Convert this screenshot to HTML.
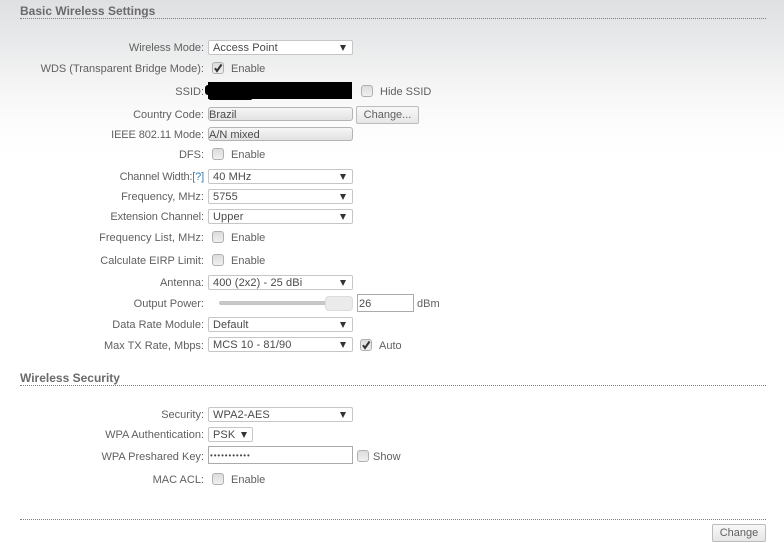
<!DOCTYPE html>
<html><head><meta charset="utf-8">
<style>
html,body{margin:0;padding:0}
body{width:784px;height:543px;overflow:hidden;position:relative;background:linear-gradient(#dfe0e2 0,#e8e9ea 40px,#f6f6f6 90px,#fdfdfd 130px,#fff 160px);font-family:"Liberation Sans",sans-serif;font-size:11px;color:#555}
.a{position:absolute;white-space:nowrap}
.l{position:absolute;right:580px;white-space:nowrap;line-height:16px;color:#606060}
.t{position:absolute;white-space:nowrap;line-height:16px;color:#606060}
h2{position:absolute;left:20px;margin:0;font-size:12px;line-height:14px;font-weight:bold;color:#6a6a6a}
.d{position:absolute;left:20px;width:746px;height:0;border-top:1px dotted #808080}
.s{position:absolute;left:208px;width:143px;height:13px;border:1px solid #c6c6c6;border-radius:2px;background:#fff;color:#4a4a4a;line-height:15px;text-indent:4px;letter-spacing:.1px}
.s i{position:absolute;right:6px;top:4px;width:0;height:0;border-left:3.5px solid transparent;border-right:3.5px solid transparent;border-top:6px solid #333}
.c{position:absolute;width:10px;height:10px;border:1px solid #b0b0b0;border-radius:3px;background:linear-gradient(#dcdcdc,#f0f0f0)}
.c svg{position:absolute;left:0;top:0}
.r{position:absolute;left:208px;width:143px;height:12px;border:1px solid #b4b4b4;border-radius:3px;background:linear-gradient(#f6f6f6,#e2e2e2);color:#4a4a4a;line-height:14px;text-indent:0}
.b{position:absolute;box-sizing:border-box;border:1px solid #bcbcbc;border-radius:2px;background:linear-gradient(#f8f8f8,#e6e6e6);color:#606060;text-align:center}
.i{position:absolute;box-sizing:border-box;border:1px solid #ababab;background:#fff;color:#4a4a4a}
</style></head><body>
<h2 style="top:4px">Basic Wireless Settings</h2>
<div class="d" style="top:18px"></div>

<div class="l" style="top:40px;letter-spacing:-.05px">Wireless Mode:</div>
<div class="s" style="top:40px">Access Point<i></i></div>

<div class="l" style="top:61px">WDS (Transparent Bridge Mode):</div>
<div class="c" style="left:212px;top:62px"><svg width="10" height="10" viewBox="0 0 10 10"><path d="M2 5.2L4 8L8.5 1.5" fill="none" stroke="#333" stroke-width="2"/></svg></div>
<div class="t" style="left:231px;top:61px">Enable</div>

<div class="l" style="top:84px">SSID:</div>
<div class="a" style="left:208px;top:82px;width:144px;height:17px;background:#000"></div>
<div class="a" style="left:205px;top:85px;width:6px;height:10px;background:#000;border-radius:3px"></div>
<div class="a" style="left:209px;top:97px;width:43px;height:3px;background:#000;border-radius:2px"></div>
<div class="c" style="left:361px;top:85px"></div>
<div class="t" style="left:380px;top:84px">Hide SSID</div>

<div class="l" style="top:107px">Country Code:</div>
<div class="r" style="top:107px">Brazil</div>
<div class="b" style="left:356px;top:106px;width:63px;height:18px;line-height:17px">Change...</div>

<div class="l" style="top:127px;letter-spacing:-.1px">IEEE 802.11 Mode:</div>
<div class="r" style="top:127px">A/N mixed</div>

<div class="l" style="top:147px">DFS:</div>
<div class="c" style="left:212px;top:148px"></div>
<div class="t" style="left:231px;top:147px">Enable</div>

<div class="l" style="top:169px;letter-spacing:-.18px">Channel Width:<span style="color:#3a7ab0">[?]</span></div>
<div class="s" style="top:169px">40 MHz<i></i></div>

<div class="l" style="top:189px">Frequency, MHz:</div>
<div class="s" style="top:189px">5755<i></i></div>

<div class="l" style="top:209px;letter-spacing:-.1px">Extension Channel:</div>
<div class="s" style="top:209px">Upper<i></i></div>

<div class="l" style="top:230px;letter-spacing:.05px">Frequency List, MHz:</div>
<div class="c" style="left:212px;top:231px"></div>
<div class="t" style="left:231px;top:230px">Enable</div>

<div class="l" style="top:253px">Calculate EIRP Limit:</div>
<div class="c" style="left:212px;top:254px"></div>
<div class="t" style="left:231px;top:253px">Enable</div>

<div class="l" style="top:275px">Antenna:</div>
<div class="s" style="top:275px">400 (2x2) - 25 dBi<i></i></div>

<div class="l" style="top:296px">Output Power:</div>
<div class="a" style="left:219px;top:301px;width:108px;height:2px;background:#c8c8c8;border:1px solid #c4c4c4;border-radius:3px"></div>
<div class="a" style="left:325px;top:296px;width:26px;height:13px;background:#ebebeb;border:1px solid #dcdcdc;border-radius:4px"></div>
<div class="i" style="left:357px;top:294px;width:57px;height:18px;line-height:18px;padding-left:1px">26</div>
<div class="t" style="left:417px;top:296px">dBm</div>

<div class="l" style="top:317px">Data Rate Module:</div>
<div class="s" style="top:317px">Default<i></i></div>

<div class="l" style="top:338px">Max TX Rate, Mbps:</div>
<div class="s" style="top:337px">MCS 10 - 81/90<i></i></div>
<div class="c" style="left:360px;top:339px"><svg width="10" height="10" viewBox="0 0 10 10"><path d="M2 5.2L4 8L8.5 1.5" fill="none" stroke="#333" stroke-width="2"/></svg></div>
<div class="t" style="left:379px;top:338px">Auto</div>

<h2 style="top:371px">Wireless Security</h2>
<div class="d" style="top:385px"></div>

<div class="l" style="top:407px">Security:</div>
<div class="s" style="top:407px">WPA2-AES<i></i></div>

<div class="l" style="top:427px">WPA Authentication:</div>
<div class="s" style="top:427px;width:43px">PSK<i style="right:5px"></i></div>

<div class="l" style="top:449px">WPA Preshared Key:</div>
<div class="i" style="left:208px;top:446px;width:145px;height:18px;line-height:17px;padding-left:1px;font-size:8px;letter-spacing:.9px">&#8226;&#8226;&#8226;&#8226;&#8226;&#8226;&#8226;&#8226;&#8226;&#8226;&#8226;</div>
<div class="c" style="left:357px;top:450px"></div>
<div class="t" style="left:373px;top:449px">Show</div>

<div class="l" style="top:472px">MAC ACL:</div>
<div class="c" style="left:212px;top:473px"></div>
<div class="t" style="left:231px;top:472px">Enable</div>

<div class="d" style="top:519px"></div>
<div class="b" style="left:712px;top:524px;width:54px;height:18px;line-height:17px">Change</div>
</body></html>
